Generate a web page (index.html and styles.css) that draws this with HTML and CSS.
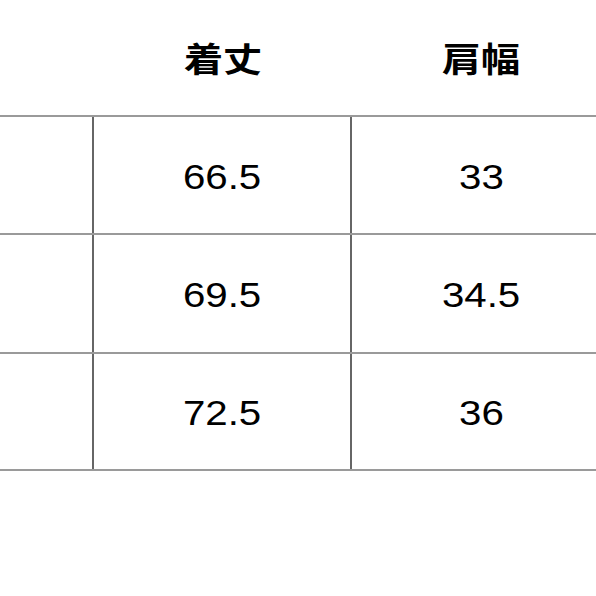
FILE: index.html
```html
<!DOCTYPE html>
<html lang="ja">
<head>
<meta charset="utf-8">
<link rel="stylesheet" href="styles.css">
</head>
<body>
<div class="table">
  <div class="row head">
    <div class="cell"></div>
    <div class="cell"><span class="txt">着丈</span></div>
    <div class="cell"><span class="txt">肩幅</span></div>
  </div>
  <div class="row body">
    <div class="cell"></div>
    <div class="cell"><span class="txt">66.5</span></div>
    <div class="cell"><span class="txt">33</span></div>
  </div>
  <div class="row body mid">
    <div class="cell"></div>
    <div class="cell"><span class="txt">69.5</span></div>
    <div class="cell"><span class="txt">34.5</span></div>
  </div>
  <div class="row body last">
    <div class="cell"></div>
    <div class="cell"><span class="txt">72.5</span></div>
    <div class="cell"><span class="txt">36</span></div>
  </div>
</div>
</body>
</html>
```
FILE: styles.css
```css
html, body {
  margin: 0;
  padding: 0;
  background: #fff;
  overflow: hidden;
}
body {
  width: 596px;
  height: 596px;
  font-family: "Liberation Sans", Arial, "Noto Sans CJK JP", sans-serif;
  color: #000;
}
.table {
  margin-left: -164px;
  width: 774px;
}
.row {
  display: grid;
  grid-template-columns: repeat(3, 258px);
  box-sizing: border-box;
  border-bottom: 2px solid #9a9a9a;
}
.head {
  height: 117px;
}
.body {
  height: 118px;
}
.mid {
  height: 119px;
}
.last {
  height: 117px;
}
.cell {
  box-sizing: border-box;
  display: flex;
  align-items: center;
  justify-content: center;
}
.body .cell:nth-child(1),
.body .cell:nth-child(2) {
  border-right: 2px solid #666;
}
.txt {
  display: inline-block;
  transform: scaleX(1.15);
  font-size: 35px;
  line-height: 1;
  margin-top: 2px;
}
.head .txt {
  font-family: "Noto Sans CJK JP", sans-serif;
  font-weight: 700;
  font-size: 34px;
  margin-top: 0;
}
```
